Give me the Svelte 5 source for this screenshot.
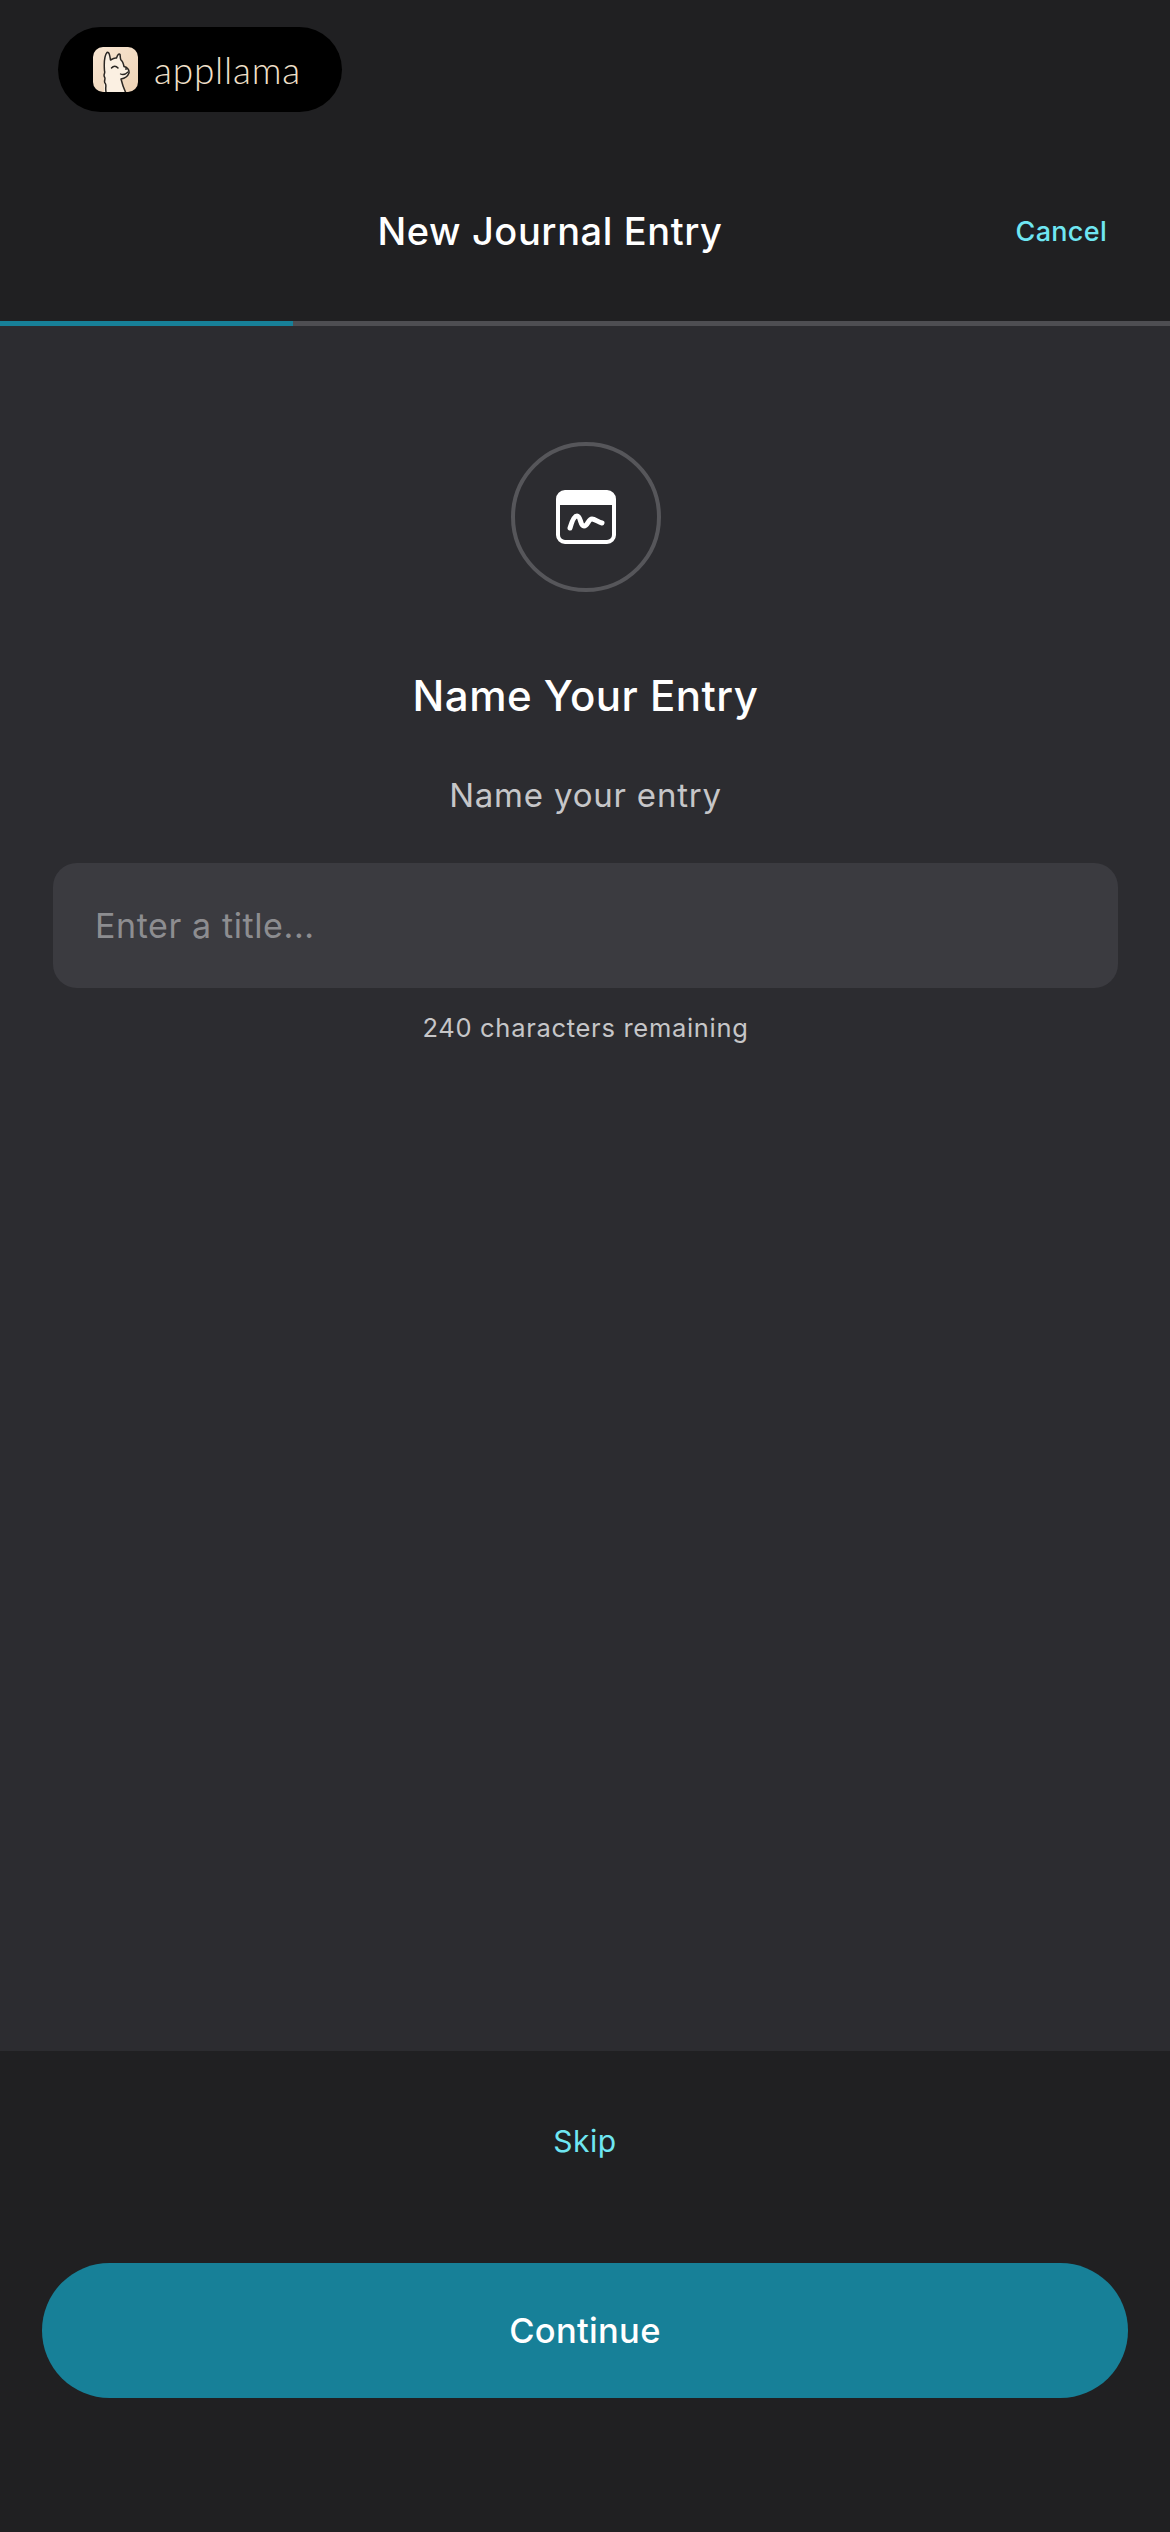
<script>
    const progress = 25;
    const remaining = 240;
</script>

<div class="screen">
    <div class="top">
        <div class="brand">
            <svg class="llama" viewBox="0 0 45 45" width="45" height="45">
                <defs>
                    <linearGradient id="tile" x1="0" y1="0" x2="1" y2="1">
                        <stop offset="0" stop-color="#f8e6d3" />
                        <stop offset="1" stop-color="#eed3b5" />
                    </linearGradient>
                </defs>
                <rect width="45" height="45" rx="10" fill="url(#tile)" />
                <path d="M11 45V22C11 15 11 8 14 5C17 5 17.500 10 18 13C20 11.500 21.500 11 23 11C23.500 8 25 6 27 7C27.500 9 27 11 27.500 13C30 14 31 17 31 19.500C34 20 36.500 23 36 26C34.500 30 31 31.500 28 32C29 36 30 41 32 45Z" fill="#fbf0e2" />
                <path d="M13 45C12 40 14 38 12 36C10.500 34 13 32 11.500 30C10 28 12.500 26 11.500 24C11 17 11 9 14 5.500C16.500 4.500 17 10 17.500 13C20 11.500 22 10.500 23.500 11C24.500 8 26 6 27 7.500C27.500 10 27 11.500 28 13C30 14.500 30.500 17 31 19.500C34 20 36.500 23 36 26C34.500 30 31 31.500 28 32C29 36 30.500 41 32.500 45" fill="none" stroke="#2b2723" stroke-width="1.500" stroke-linejoin="round" stroke-linecap="round" />
                <path d="M18.500 21C20.500 18.500 23 18.500 25 21" fill="none" stroke="#2b2723" stroke-width="1.500" stroke-linecap="round" />
                <path d="M27.500 27C30 28 33 27 35 25" fill="none" stroke="#2b2723" stroke-width="1.300" stroke-linecap="round" />
                <circle cx="33" cy="22" r="0.900" fill="#2b2723" />
            </svg>
            <span class="wordmark">appllama</span>
        </div>
        <div class="nav">
            <h1>New Journal Entry</h1>
            <button class="link cancel">Cancel</button>
        </div>
    </div>

    <div class="track"><div class="fill" style="width: {progress}%"></div></div>

    <main>
        <div class="badge">
            <svg viewBox="0 0 60 54" width="60" height="54">
                <rect x="2" y="2" width="56" height="50" rx="7" fill="none" stroke="#fff" stroke-width="4" />
                <path d="M7 2H53A5 5 0 0 1 58 7V15H2V7A5 5 0 0 1 7 2Z" fill="#fff" />
                <path d="M14 38C16 31 18 26 21 26C25 26 24 36 28 36C32 36 32 29 36 29C39 29 42 32 46 33" fill="none" stroke="#fff" stroke-width="5" stroke-linecap="round" stroke-linejoin="round" />
            </svg>
        </div>
        <h2>Name Your Entry</h2>
        <p class="sub">Name your entry</p>
        <input class="field" type="text" placeholder="Enter a title..." />
        <p class="count">{remaining} characters remaining</p>
    </main>

    <footer>
        <button class="link skip">Skip</button>
        <button class="primary">Continue</button>
    </footer>
</div>

<style>
    :global(body) {
        margin: 0;
        background: #202022;
    }

    .screen {
        width: 1170px;
        height: 2532px;
        display: flex;
        flex-direction: column;
        background: #202022;
        color: #fff;
        font-family: Inter, "Liberation Sans", sans-serif;
    }

    .top {
        height: 321px;
        box-sizing: border-box;
        padding-top: 27px;
    }

    .brand {
        margin-left: 58px;
        width: 284px;
        height: 85px;
        box-sizing: border-box;
        padding-left: 35px;
        display: flex;
        align-items: center;
        gap: 16px;
        background: #000;
        border-radius: 43px;
    }

    .llama {
        flex: none;
    }

    .wordmark {
        font-family: Lato, sans-serif;
        font-weight: 300;
        font-size: 37px;
        line-height: 1;
        color: #f2e0cb;
        letter-spacing: 0.800px;
    }

    .nav {
        height: 64px;
        margin-top: 87px;
        padding: 0 63px 0 0;
        display: flex;
        align-items: center;
        justify-content: flex-end;
        gap: 293px;
    }

    h1 {
        margin: 0;
        font-size: 38px;
        font-weight: 550;
        letter-spacing: 0.600px;
    }

    .link {
        padding: 0;
        border: 0;
        background: none;
        font-family: inherit;
        color: #6fe6f2;
        font-size: 27px;
        font-weight: 450;
        letter-spacing: 0.300px;
    }

    .track {
        height: 5px;
        flex: none;
        background: #4e4e52;
    }

    .fill {
        height: 100%;
        background: #178098;
    }

    main {
        flex: 1;
        display: flex;
        flex-direction: column;
        align-items: center;
        padding: 116px 52px 0 53px;
        background: #2c2c30;
    }

    .badge {
        width: 150px;
        height: 150px;
        box-sizing: border-box;
        display: flex;
        align-items: center;
        justify-content: center;
        border: 4px solid #56565a;
        border-radius: 50%;
    }

    h2 {
        margin: 78px 0 0;
        font-size: 42px;
        line-height: 52px;
        font-weight: 550;
        letter-spacing: 0.500px;
    }

    .sub {
        margin: 48px 0 0;
        font-size: 33px;
        line-height: 50px;
        color: #c6c6c8;
        letter-spacing: 0.800px;
    }

    .field {
        width: 100%;
        height: 125px;
        box-sizing: border-box;
        margin-top: 43px;
        padding: 0 42px;
        border: 0;
        border-radius: 24px;
        background: #3b3b40;
        color: #fff;
        font-family: inherit;
        font-size: 34px;
        letter-spacing: 0.600px;
    }

    .field::placeholder {
        color: #8d8d90;
        opacity: 1;
    }

    .count {
        margin: 24px 0 0;
        font-size: 25.500px;
        line-height: 32px;
        color: #c6c6c8;
        letter-spacing: 0.700px;
    }

    footer {
        height: 481px;
        flex: none;
        box-sizing: border-box;
        padding-top: 70px;
        display: flex;
        flex-direction: column;
        align-items: center;
    }

    .skip {
        height: 40px;
        font-size: 30px;
        font-weight: 400;
        letter-spacing: 0.500px;
    }

    .primary {
        width: 1086px;
        height: 135px;
        margin-top: 102px;
        border: 0;
        border-radius: 68px;
        background: #178098;
        color: #fff;
        font-family: inherit;
        font-size: 34.500px;
        font-weight: 450;
        letter-spacing: 0.300px;
    }
</style>
